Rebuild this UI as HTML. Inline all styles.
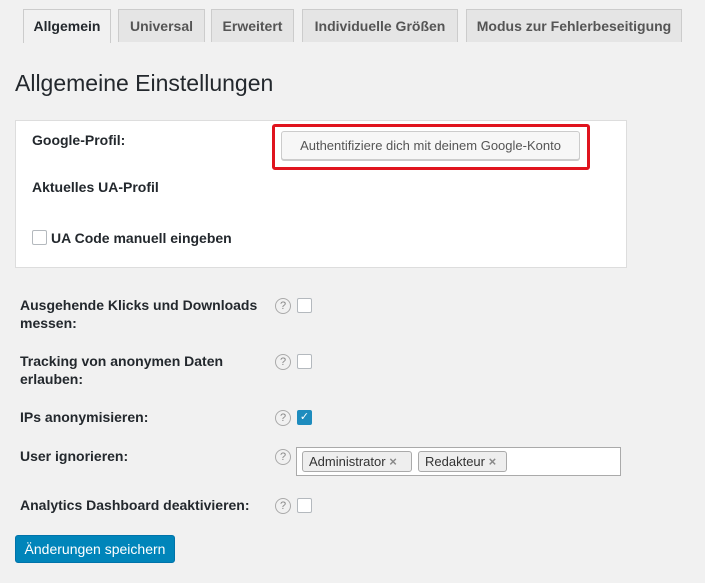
<!DOCTYPE html>
<html><head><meta charset="utf-8"><style>
body{margin:0;background:#f1f1f1;font-family:"Liberation Sans",sans-serif;color:#23282d;width:705px;height:583px;overflow:hidden;position:relative}
.a{position:absolute}
.tab{position:absolute;top:9px;height:33px;box-sizing:border-box;border:1px solid #ccc;border-bottom:none;background:#e5e5e5;font-size:14px;font-weight:bold;color:#555;text-align:center;line-height:32px}
.lbl{position:absolute;left:20px;font-size:14px;font-weight:bold;line-height:18px;color:#23282d}
.help{position:absolute;left:275px;width:14px;height:14px;border:1px solid #aaa;border-radius:50%;font-size:11px;color:#888;text-align:center;line-height:14px}
.cb{position:absolute;width:13px;height:13px;border:1px solid #b4b9be;border-radius:2px;background:#fff}
.tag{position:absolute;top:451px;height:21px;box-sizing:border-box;border:1px solid #aaa;border-radius:3px;background:#eee;font-size:13px;line-height:19px;padding-left:6px;color:#333}
</style></head><body>
<div class="tab" style="left:23px;width:88px;background:#f1f1f1;color:#23282d;height:34px">Allgemein</div>
<div class="tab" style="left:118px;width:87px">Universal</div>
<div class="tab" style="left:211px;width:83px">Erweitert</div>
<div class="tab" style="left:302px;width:156px">Individuelle Größen</div>
<div class="tab" style="left:466px;width:216px">Modus zur Fehlerbeseitigung</div>
<div class="a" style="left:15px;top:70px;font-size:23px;color:#23282d">Allgemeine Einstellungen</div>
<div class="a" style="left:15px;top:120px;width:610px;height:146px;background:#fff;border:1px solid #ddd"></div>
<div class="lbl" style="left:32px;top:131px">Google-Profil:</div>
<div class="a" style="left:272px;top:124px;width:312px;height:40px;border:3px solid #e0141e;border-radius:3px"></div>
<div class="a" style="left:281px;top:131px;width:297px;height:27px;border:1px solid #ccc;border-radius:3px;background:#f7f7f7;box-shadow:0 1px 0 #ccc;font-size:13px;color:#555;text-align:center;line-height:27px">Authentifiziere dich mit deinem Google-Konto</div>
<div class="lbl" style="left:32px;top:178px">Aktuelles UA-Profil</div>
<div class="cb" style="left:32px;top:230px"></div>
<div class="lbl" style="left:51px;top:229px">UA Code manuell eingeben</div>
<div class="lbl" style="top:296px">Ausgehende Klicks und Downloads<br>messen:</div>
<div class="help" style="top:298px">?</div><div class="cb" style="left:297px;top:298px"></div>
<div class="lbl" style="top:352px">Tracking von anonymen Daten<br>erlauben:</div>
<div class="help" style="top:354px">?</div><div class="cb" style="left:297px;top:354px"></div>
<div class="lbl" style="top:408px">IPs anonymisieren:</div>
<div class="help" style="top:410px">?</div><div class="cb" style="left:297px;top:410px;background:#1e8cbe;border-color:#1e8cbe;color:#fff;font-size:11px;line-height:13px;text-align:center">✓</div>
<div class="lbl" style="top:447px">User ignorieren:</div>
<div class="help" style="top:449px">?</div>
<div class="a" style="left:296px;top:447px;width:323px;height:27px;border:1px solid #aaa;background:#fff"></div>
<div class="tag" style="left:302px;width:110px">Administrator <span style="color:#888;font-weight:bold">×</span></div>
<div class="tag" style="left:418px;width:89px">Redakteur <span style="color:#888;font-weight:bold">×</span></div>
<div class="lbl" style="top:496px">Analytics Dashboard deaktivieren:</div>
<div class="help" style="top:498px">?</div><div class="cb" style="left:297px;top:498px"></div>
<div class="a" style="left:15px;top:535px;width:160px;height:28px;background:#0085ba;border:1px solid #0073aa;border-radius:3px;box-sizing:border-box;color:#fff;font-size:14px;text-align:center;line-height:26px">Änderungen speichern</div>
</body></html>
